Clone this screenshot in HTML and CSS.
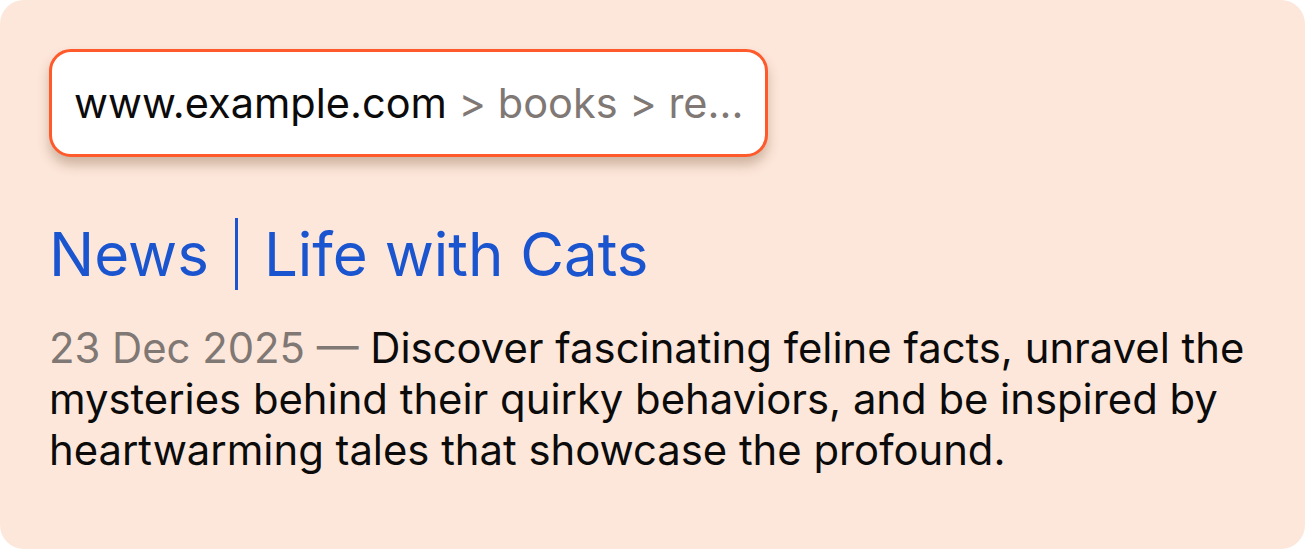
FILE: index.html
```html
<!DOCTYPE html>
<html lang="en">
<head>
<meta charset="utf-8">
<title>Search result</title>
<link rel="stylesheet" href="styles.css">
</head>
<body>
<div class="card">
  <div class="url-pill">
    <span class="domain">www.example.com</span><span class="path"> &gt; books &gt; re...</span>
  </div>
  <h1 class="title"><span>News</span><span class="sep"></span><span>Life with Cats</span></h1>
  <p class="desc"><span class="date">23 Dec 2025 —</span> Discover fascinating feline facts, unravel the mysteries behind their quirky behaviors, and be inspired by heartwarming tales that showcase the profound.</p>
</div>
</body>
</html>
```
FILE: styles.css
```css
html, body {
  margin: 0;
  padding: 0;
  background: #ffffff;
}
body {
  font-family: Inter, "Noto Sans", sans-serif;
}
.card {
  box-sizing: border-box;
  width: 1305px;
  height: 549px;
  background: #fde7da;
  border-radius: 24px;
  padding: 49px 49px 0 49px;
}
.url-pill {
  display: inline-block;
  box-sizing: border-box;
  height: 108px;
  padding: 0 22px;
  background: #ffffff;
  border: 3px solid #ff5a2b;
  border-radius: 22px;
  box-shadow: 0 8px 12px rgba(110, 70, 40, 0.32);
  font-size: 41.5px;
  line-height: 102px;
  white-space: nowrap;
}
.domain {
  color: #0b0b0b;
}
.path {
  color: #7f7874;
}
.title {
  display: flex;
  align-items: center;
  gap: 26px;
  margin: 61px 0 0 0;
  font-size: 60px;
  font-weight: 400;
  line-height: 72px;
  color: #1a55cf;
}
.sep {
  width: 3px;
  height: 72px;
  background: #1a55cf;
}
.desc {
  margin: 33px 0 0 0;
  font-size: 41.8px;
  line-height: 51px;
  color: #0b0b0b;
  max-width: 1215px;
}
.date {
  color: #7f7874;
}
```
